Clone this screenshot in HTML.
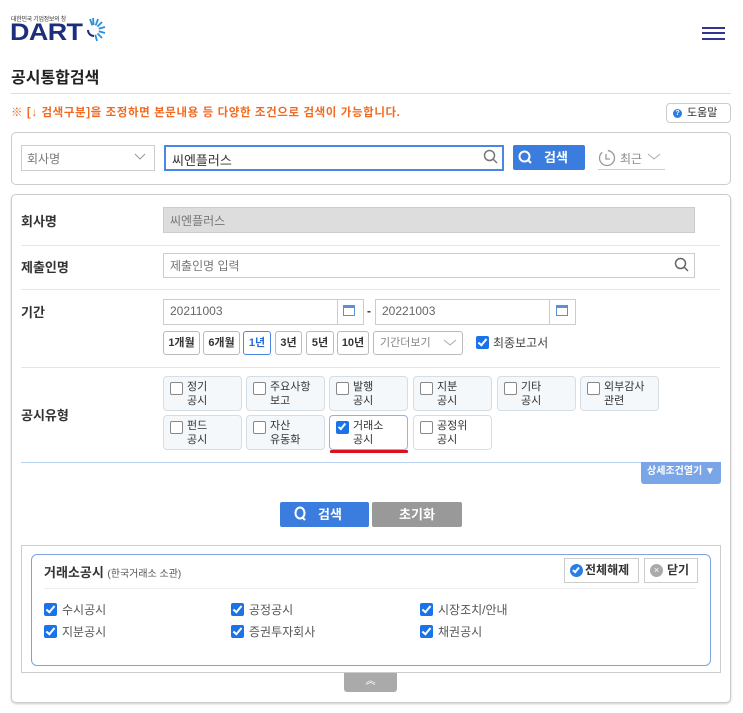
<!DOCTYPE html>
<html><head><meta charset="utf-8"><style>
*{box-sizing:border-box;margin:0;padding:0}
body{width:743px;height:713px;background:#fff;font-family:"Liberation Sans","Noto Sans CJK KR",sans-serif;color:#333;position:relative;overflow:hidden}
.a{position:absolute}
.b{position:absolute;border:1px solid #ccc;background:#fff}
.lbl{position:absolute;left:21px;font-size:13px;font-weight:bold;color:#333}
.hl{position:absolute;left:21px;width:699px;height:1px;background:#e5e5e5}
.pb{position:absolute;top:331px;height:24px;border:1px solid #bbb;border-radius:3px;font-size:11px;font-weight:bold;text-align:center;line-height:22px;color:#333;background:#fff}
.tb{position:absolute;width:79px;height:35px;border:1px solid #d5dde5;border-radius:4px;background:#f4f8fb;font-size:11px;color:#333;line-height:14px}
.tb .c{position:absolute;left:6px;top:5px;width:13px;height:13px;border:1px solid #888;border-radius:2px;background:#fff}
.tb .t{position:absolute;left:23px;top:3px;text-align:left}
.ck{display:inline-block;width:13px;height:13px;background:#1a73e8;border-radius:2px;position:relative;vertical-align:middle}
.ck:after{content:"";position:absolute;left:4px;top:1px;width:3px;height:7px;border:solid #fff;border-width:0 2px 2px 0;transform:rotate(40deg)}
.ci{position:absolute;font-size:12px;color:#555}
.ci .ck{margin-right:5px;margin-top:-2px}
</style></head><body>
<div class="a" style="left:11px;top:14px;font-size:6px;color:#333;letter-spacing:-0.3px">대한민국 기업정보의 창</div>
<div class="a" style="left:10px;top:19px;font-size:24px;font-weight:bold;color:#1d2f7a;font-family:'Liberation Sans',sans-serif;transform:scaleX(1.12);transform-origin:left;letter-spacing:-0.5px">DART</div>
<svg class="a" style="left:84px;top:16px" width="22" height="26" viewBox="0 0 22 26">
<g stroke="#2a8fd8" stroke-width="1.8">
<line x1="10" y1="14" x2="9" y2="2"/><line x1="10" y1="14" x2="14" y2="3"/><line x1="10" y1="14" x2="18" y2="6"/><line x1="10" y1="14" x2="21" y2="11"/><line x1="10" y1="14" x2="21" y2="17"/><line x1="10" y1="14" x2="18" y2="22"/><line x1="10" y1="14" x2="13" y2="25"/><line x1="10" y1="14" x2="6" y2="3"/></g>
<circle cx="10" cy="14" r="5" fill="#fff"/><path d="M4 14A6 6 0 0 0 10 20" stroke="#1d2f7a" stroke-width="2" fill="none"/></svg>
<div class="a" style="left:702px;top:27px;width:23px;height:2px;background:#2f3590"></div>
<div class="a" style="left:702px;top:32px;width:23px;height:2px;background:#2f3590"></div>
<div class="a" style="left:702px;top:38px;width:23px;height:2px;background:#2f3590"></div>

<div class="a" style="left:11px;top:64px;font-size:16px;font-weight:bold;color:#222">공시통합검색</div>
<div class="a" style="left:11px;top:93px;width:720px;height:1px;background:#ddd"></div>
<div class="a" style="left:11px;top:104px;font-size:11.5px;font-weight:bold;color:#f26a21;letter-spacing:0.6px">※ [↓ 검색구분]을 조정하면 본문내용 등 다양한 조건으로 검색이 가능합니다.</div>
<div class="b" style="left:666px;top:103px;width:65px;height:20px;border-radius:4px;font-size:11px;line-height:18px;padding-left:20px;color:#333">도움말</div>
<div class="a" style="left:673px;top:109px;width:9px;height:9px;border-radius:50%;background:#2a7de1;color:#fff;font-size:7px;text-align:center;line-height:9px;font-weight:bold">?</div>

<div class="b" style="left:11px;top:132px;width:720px;height:53px;border-radius:5px"></div>
<div class="b" style="left:21px;top:145px;width:134px;height:26px;font-size:12px;color:#777;padding:4px 5px">회사명</div>
<svg class="a" style="left:134px;top:153px" width="12" height="8"><path d="M1 1L6 6L11 1" stroke="#999" fill="none"/></svg>
<div class="b" style="left:164px;top:145px;width:340px;height:26px;border:2px solid #4a86e8;font-size:13px;color:#333;padding:3px 6px">씨엔플러스</div>
<svg class="a" style="left:483px;top:149px" width="16" height="16"><circle cx="6.5" cy="6.5" r="5" stroke="#777" stroke-width="1.5" fill="none"/><line x1="10" y1="10" x2="14" y2="14" stroke="#777" stroke-width="1.5"/></svg>
<div class="a" style="left:513px;top:145px;width:72px;height:25px;background:#3b7ddf;border-radius:2px;color:#fff;font-size:13px;font-weight:bold;line-height:25px;padding-left:31px">검색</div>
<svg class="a" style="left:518px;top:150px" width="16" height="16"><circle cx="6.5" cy="6.5" r="5" stroke="#fff" stroke-width="2" fill="none"/><line x1="10" y1="10" x2="13" y2="13" stroke="#fff" stroke-width="2"/></svg>
<svg class="a" style="left:598px;top:148px" width="20" height="20"><circle cx="9" cy="10" r="7.5" stroke="#999" stroke-width="1.3" fill="none" stroke-dasharray="30 6"/><path d="M8 6V11H12" stroke="#999" fill="none" stroke-width="1.3"/></svg>
<div class="a" style="left:620px;top:150px;font-size:12px;color:#888">최근</div>
<svg class="a" style="left:647px;top:153px" width="14" height="8"><path d="M1 1L7 6L13 1" stroke="#aaa" fill="none"/></svg>
<div class="a" style="left:598px;top:169px;width:67px;height:1px;background:#ccc"></div>

<div class="b" style="left:11px;top:194px;width:720px;height:509px;border-radius:5px;box-shadow:0 1px 2px rgba(0,0,0,.2)"></div>
<div class="lbl" style="top:211px">회사명</div>
<div class="a" style="left:163px;top:207px;width:532px;height:26px;background:#ddd;border:1px solid #ccc;font-size:12px;color:#777;padding:4px 6px">씨엔플러스</div>
<div class="hl" style="top:245px"></div>
<div class="lbl" style="top:257px">제출인명</div>
<div class="b" style="left:163px;top:253px;width:532px;height:25px;font-size:12px;color:#777;padding:3px 6px">제출인명 입력</div>
<svg class="a" style="left:674px;top:257px" width="16" height="16"><circle cx="6.5" cy="6.5" r="5" stroke="#666" stroke-width="1.5" fill="none"/><line x1="10" y1="10" x2="14" y2="14" stroke="#666" stroke-width="1.5"/></svg>
<div class="hl" style="top:289px"></div>
<div class="lbl" style="top:302px">기간</div>
<div class="b" style="left:163px;top:299px;width:201px;height:26px;font-size:12px;color:#666;padding:4px 6px">20211003</div>
<div class="a" style="left:337px;top:300px;width:1px;height:24px;background:#ccc"></div>
<div class="a" style="left:343px;top:305px;width:12px;height:11px;border:1.5px solid #5b8fd6;border-top-width:3px"></div>
<div class="a" style="left:367px;top:304px;font-size:12px;font-weight:bold">-</div>
<div class="b" style="left:375px;top:299px;width:201px;height:26px;font-size:12px;color:#666;padding:4px 6px">20221003</div>
<div class="a" style="left:549px;top:300px;width:1px;height:24px;background:#ccc"></div>
<div class="a" style="left:556px;top:305px;width:12px;height:11px;border:1.5px solid #5b8fd6;border-top-width:3px"></div>
<div class="pb" style="left:163px;width:37px">1개월</div>
<div class="pb" style="left:203px;width:37px">6개월</div>
<div class="pb" style="left:243px;width:28px;border-color:#4a86e8;color:#2a6ad8">1년</div>
<div class="pb" style="left:275px;width:27px">3년</div>
<div class="pb" style="left:306px;width:28px">5년</div>
<div class="pb" style="left:337px;width:32px">10년</div>
<div class="pb" style="left:373px;width:90px;font-weight:normal;color:#888;text-align:left;padding-left:6px">기간더보기</div>
<svg class="a" style="left:443px;top:339px" width="14" height="8"><path d="M1 1L7 6L13 1" stroke="#aaa" fill="none"/></svg>
<div class="a" style="left:476px;top:334px;font-size:12px;color:#444"><span class="ck" style="margin-right:4px;margin-top:-2px"></span>최종보고서</div>
<div class="hl" style="top:367px"></div>
<div class="lbl" style="top:405px">공시유형</div>

<div class="tb" style="left:163px;top:376px"><span class="c"></span><span class="t">정기<br>공시</span></div>
<div class="tb" style="left:246px;top:376px"><span class="c"></span><span class="t">주요사항<br>보고</span></div>
<div class="tb" style="left:329px;top:376px"><span class="c"></span><span class="t">발행<br>공시</span></div>
<div class="tb" style="left:413px;top:376px"><span class="c"></span><span class="t">지분<br>공시</span></div>
<div class="tb" style="left:497px;top:376px"><span class="c"></span><span class="t">기타<br>공시</span></div>
<div class="tb" style="left:580px;top:376px"><span class="c"></span><span class="t">외부감사<br>관련</span></div>
<div class="tb" style="left:163px;top:415px"><span class="c"></span><span class="t">펀드<br>공시</span></div>
<div class="tb" style="left:246px;top:415px"><span class="c"></span><span class="t">자산<br>유동화</span></div>
<div class="tb" style="left:329px;top:415px;background:#fff;border-color:#8fb4e8"><span class="c" style="border:none;background:#1a73e8"></span><span class="a" style="left:10px;top:6px;width:4px;height:8px;border:solid #fff;border-width:0 2px 2px 0;transform:rotate(40deg)"></span><span class="t">거래소<br>공시</span></div>
<div class="tb" style="left:413px;top:415px;background:#fff"><span class="c"></span><span class="t">공정위<br>공시</span></div>
<div class="a" style="left:330px;top:450px;width:78px;height:3px;background:#d8131f;border-radius:1px"></div>

<div class="a" style="left:21px;top:462px;width:699px;height:1px;background:#b8d0f0"></div>
<div class="a" style="left:641px;top:462px;width:80px;height:22px;background:#7aa5e6;border-radius:0 0 3px 3px;color:#fff;font-size:10px;font-weight:bold;line-height:20px;text-align:center">상세조건열기 ▼</div>

<div class="a" style="left:280px;top:502px;width:89px;height:25px;background:#3b7ddf;border-radius:2px;color:#fff;font-size:13px;font-weight:bold;line-height:25px;padding-left:38px">검색</div>
<svg class="a" style="left:293px;top:506px" width="16" height="16"><ellipse cx="7" cy="7" rx="4.5" ry="5.5" stroke="#fff" stroke-width="2" fill="none"/><line x1="9" y1="11" x2="12" y2="14" stroke="#fff" stroke-width="2"/></svg>
<div class="a" style="left:372px;top:502px;width:90px;height:25px;background:#999;border-radius:2px;color:#fff;font-size:13px;font-weight:bold;line-height:25px;text-align:center">초기화</div>

<div class="a" style="left:21px;top:545px;width:700px;height:128px;border:1px solid #ccc"></div>
<div class="a" style="left:31px;top:554px;width:680px;height:112px;border:1px solid #7fa3e0;border-radius:6px"></div>
<div class="a" style="left:44px;top:562px;font-size:13px;font-weight:bold;color:#333">거래소공시 <span style="font-size:10px;font-weight:normal;color:#555">(한국거래소 소관)</span></div>
<div class="b" style="left:564px;top:558px;width:75px;height:25px;font-size:12px;font-weight:bold;line-height:23px;padding-left:20px;color:#333">전체해제</div>
<div class="a" style="left:570px;top:564px;width:13px;height:13px;border-radius:50%;background:#2a7de1"></div>
<div class="a" style="left:574px;top:566px;width:4px;height:7px;border:solid #fff;border-width:0 2px 2px 0;transform:rotate(40deg)"></div>
<div class="b" style="left:644px;top:558px;width:54px;height:25px;font-size:12px;font-weight:bold;line-height:23px;padding-left:22px;color:#333">닫기</div>
<div class="a" style="left:650px;top:564px;width:13px;height:13px;border-radius:50%;background:#aaa;color:#fff;font-size:9px;line-height:13px;text-align:center">×</div>
<div class="a" style="left:44px;top:588px;width:652px;height:1px;background:#eee"></div>
<div class="ci" style="left:44px;top:601px"><span class="ck"></span>수시공시</div>
<div class="ci" style="left:231px;top:601px"><span class="ck"></span>공정공시</div>
<div class="ci" style="left:420px;top:601px"><span class="ck"></span>시장조치/안내</div>
<div class="ci" style="left:44px;top:623px"><span class="ck"></span>지분공시</div>
<div class="ci" style="left:231px;top:623px"><span class="ck"></span>증권투자회사</div>
<div class="ci" style="left:420px;top:623px"><span class="ck"></span>채권공시</div>
<div class="a" style="left:344px;top:673px;width:53px;height:19px;background:#aaa;border-radius:0 0 3px 3px;color:#fff;font-size:10px;text-align:center;line-height:18px">︽</div>
</body></html>
